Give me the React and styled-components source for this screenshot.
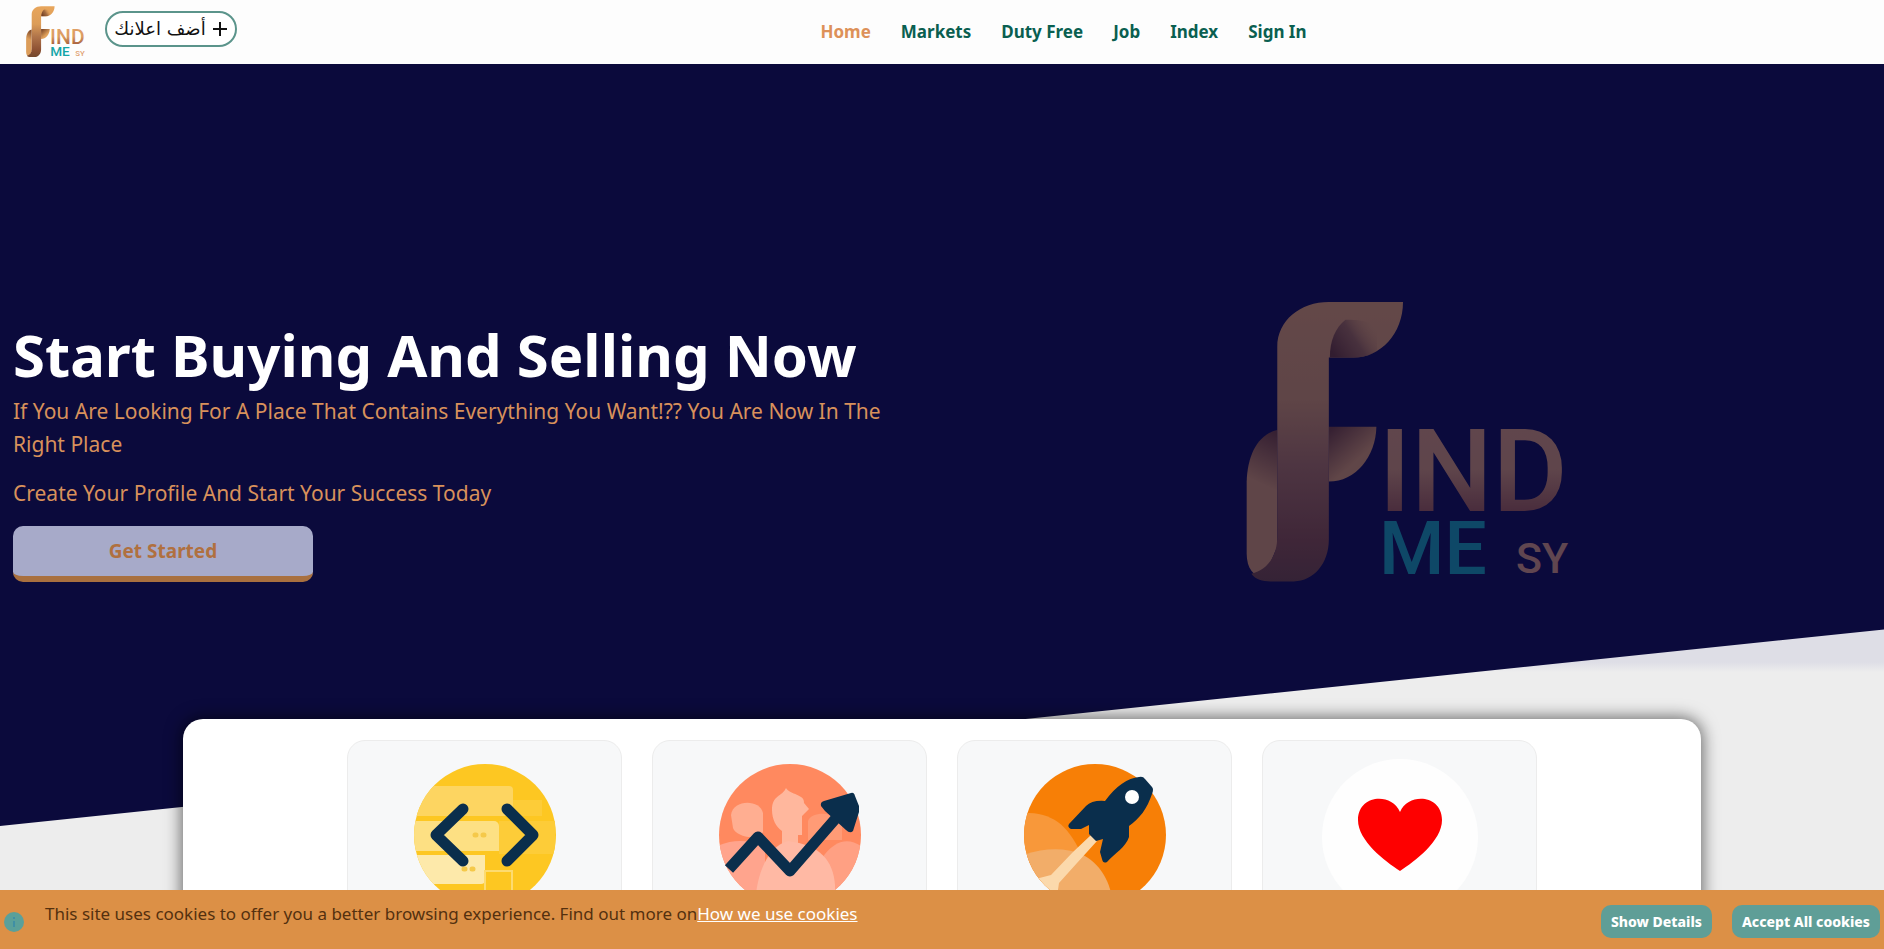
import React from 'react';
import styled, { createGlobalStyle } from 'styled-components';

const GlobalStyle = createGlobalStyle`
  * { box-sizing: border-box; }
  body {
    margin: 0;
    background: #ededed;
    font-family: "Noto Sans", "Open Sans", sans-serif;
  }
  button { font-family: inherit; cursor: pointer; }
`;

const Header = styled.header`
  display: flex;
  align-items: center;
  height: 64px;
  padding-left: 26px;
  background: #fdfdfd;
`;

const HomeLink = styled.a`
  display: flex;
  margin-right: 20px;
`;

const AddButton = styled.button`
  display: flex;
  align-items: center;
  justify-content: center;
  gap: 6px;
  width: 132px;
  height: 36px;
  margin-bottom: 6px;
  padding: 0 4px;
  border: 2px solid #5b948b;
  border-radius: 18px;
  background: #fff;
  color: #111;
  font-family: "DejaVu Sans", sans-serif;
  font-size: 18px;
  line-height: 24px;
  white-space: nowrap;
`;

const Nav = styled.nav`
  display: flex;
  flex: 1;
  justify-content: center;
  gap: 30px;
  padding-left: 6px;
`;

const NavLink = styled.a`
  color: ${(p) => (p.$active ? '#dd9159' : '#0a5f50')};
  font-size: 17px;
  font-weight: 700;
  line-height: 24px;
  text-decoration: none;
`;

const Hero = styled.section`
  position: relative;
  display: grid;
  grid-template-columns: 1fr 1fr;
  min-height: 655px;
  padding-top: 237px;

  &::before {
    content: "";
    position: absolute;
    z-index: -2;
    inset: 0 0 auto;
    height: 608px;
    background: linear-gradient(#dedee6 598px, #ededed);
  }
  &::after {
    content: "";
    position: absolute;
    z-index: -1;
    inset: 0 0 auto;
    height: 762px;
    background: #0b0a3c;
    clip-path: polygon(0 0, 100% 0, 100% 74.2%, 0 100%);
  }
`;

const Pitch = styled.div`
  padding: 14px 32px 0 13px;
`;

const Title = styled.h1`
  margin: 0;
  color: #fff;
  font-size: 58px;
  font-weight: 700;
  line-height: 80px;
`;

const Lead = styled.p`
  margin: 0 0 16px;
  color: #d8915b;
  font-size: 21px;
  line-height: 33px;
`;

const StartButton = styled.button`
  width: 300px;
  height: 56px;
  border: 0;
  border-bottom: 6px solid #a9703f;
  border-radius: 10px;
  background: #a7aac9;
  color: #b0703f;
  font-size: 19px;
  font-weight: 700;
`;

const HeroArt = styled.div`
  display: flex;
  justify-content: center;
  align-items: flex-start;
  padding-right: 10px;
  opacity: 0.4;
`;

const Panel = styled.main`
  display: flex;
  justify-content: center;
  gap: 30px;
  margin: 0 183px;
  padding: 21px 18px 19px;
  border-radius: 20px 20px 0 0;
  background: #fff;
  box-shadow: 0 0 16px 2px rgba(0, 0, 0, 0.55);
`;

const Card = styled.article`
  display: flex;
  flex: 0 1 275px;
  justify-content: center;
  padding: 14px 0;
  border: 1px solid #ececec;
  border-radius: 18px;
  background: #f7f8f9;
`;

const CookieBar = styled.aside`
  position: fixed;
  inset: auto 0 0;
  display: flex;
  height: 59px;
  padding: 0 4px;
  background: #dc9046;
`;

const InfoIcon = styled.svg`
  align-self: center;
  margin: 4px 21px 0 0;
`;

const CookieText = styled.p`
  flex: 1;
  margin: 12px 0 0;
  color: #54300f;
  font-size: 17px;
  line-height: 24px;
`;

const CookieLink = styled.a`
  color: #fff;
`;

const CookieActions = styled.div`
  display: flex;
  align-items: center;
  gap: 20px;
  padding-top: 4px;
`;

const CookieButton = styled.button`
  height: 33px;
  padding: 0 10px;
  border: 0;
  border-radius: 10px;
  background: #5f9e97;
  color: #fff;
  font-size: 14px;
  font-weight: 800;
  white-space: nowrap;
`;

const LogoArt = styled.svg`
  overflow: visible;
`;

function Logo({ id, width }) {
  const u = (n) => `url(#${id}-${n})`;
  return (
    <LogoArt width={width} viewBox="76 62 974 846" role="img" aria-label="Find Me SY">
      <defs>
        <linearGradient id={`${id}-stem`} x1="0" y1="65" x2="0" y2="905" gradientUnits="userSpaceOnUse">
          <stop offset="0" stopColor="#e8a65c" />
          <stop offset="0.35" stopColor="#dc9d58" />
          <stop offset="0.6" stopColor="#b0744a" />
          <stop offset="0.85" stopColor="#8e5234" />
          <stop offset="1" stopColor="#74482e" />
        </linearGradient>
        <linearGradient id={`${id}-fold`} x1="335" y1="215" x2="465" y2="130" gradientUnits="userSpaceOnUse">
          <stop offset="0" stopColor="#6d3a20" />
          <stop offset="0.5" stopColor="#8f5a38" stopOpacity="0.75" />
          <stop offset="1" stopColor="#e8a65c" stopOpacity="0" />
        </linearGradient>
        <linearGradient id={`${id}-arm`} x1="330" y1="450" x2="410" y2="540" gradientUnits="userSpaceOnUse">
          <stop offset="0" stopColor="#784326" />
          <stop offset="1" stopColor="#e0a05a" />
        </linearGradient>
        <linearGradient id={`${id}-back`} x1="165" y1="460" x2="100" y2="600" gradientUnits="userSpaceOnUse">
          <stop offset="0" stopColor="#784326" />
          <stop offset="1" stopColor="#dc9d5a" />
        </linearGradient>
        <linearGradient id={`${id}-word`} x1="0" y1="445" x2="0" y2="692" gradientUnits="userSpaceOnUse">
          <stop offset="0" stopColor="#e0a066" />
          <stop offset="0.5" stopColor="#dc9d62" />
          <stop offset="1" stopColor="#a8623f" />
        </linearGradient>
      </defs>
      <path d="M325 440H468C466 530 405 605 325 605Z" fill={u('arm')} />
      <path d="M170 450C112 462 80 525 78 605V820C78 868 100 890 130 895L170 800Z" fill={u('back')} />
      <path d="M170 200C170 120 240 65 325 65H548C548 160 480 232 400 232H325V780C325 850 280 905 220 905H150C125 905 105 900 92 882C140 870 170 830 170 770Z" fill={u('stem')} />
      <path d="M328 232C328 180 345 142 375 118C420 118 460 122 470 150V212C448 226 424 232 400 232Z" fill={u('fold')} />
      <g fontFamily="Roboto, sans-serif" fontWeight="500">
        <text x="474" y="692" fontSize="346" fill={u('word')}>IND</text>
        <text x="476" y="882" fontSize="225" fill="#14a5a8">ME</text>
        <text x="888" y="880" fontSize="129" fill="#e0a070">SY</text>
      </g>
    </LogoArt>
  );
}

function CodeArt() {
  return (
    <svg width="160" height="160" viewBox="0 0 160 160" aria-hidden="true">
      <clipPath id="code-clip"><circle cx="80" cy="80" r="71" /></clipPath>
      <g clipPath="url(#code-clip)">
        <rect width="160" height="160" fill="#fdc722" />
        <path d="M25 31H104a4 4 0 0 1 4 4V61H5V35Z" fill="#fdd561" />
        <path d="M108 45H137V61H108ZM94 66H150V99H94Z" fill="#fdcc38" />
        <path d="M5 66H89a5 5 0 0 1 5 5V96H5Z" fill="#fde083" />
        <path d="M5 100H80V125a4 4 0 0 1-4 4H5Z" fill="#fde9aa" />
        <path d="M80 116H107V151H80Z" fill="#fdc722" stroke="#fddb70" strokeWidth="2" />
        <path d="M70 80h1M78 80h1M59 114h1M67 114h1" stroke="#f5c94a" strokeWidth="5" strokeLinecap="round" />
      </g>
      <path d="M58 54 31 80 58 106M102 54 128 80 102 106" fill="none" stroke="#0a2e4c" strokeWidth="11" strokeLinecap="round" strokeLinejoin="round" />
    </svg>
  );
}

function GrowthArt() {
  return (
    <svg width="160" height="160" viewBox="0 0 160 160" aria-hidden="true">
      <clipPath id="growth-clip"><circle cx="80" cy="80" r="71" /></clipPath>
      <g clipPath="url(#growth-clip)">
        <rect width="160" height="160" fill="#ff895f" />
        <path d="M21 60C23 44 50 44 53 58V77C48 86 26 82 23 73Z" fill="#ffae91" />
        <path d="M98 66C102 54 132 58 132 70V85H98Z" fill="#ff9b76" />
        <path d="M5 92Q30 80 55 92V155H5Z" fill="#ffa48d" />
        <path d="M112 103Q132 75 155 94V155H112Z" fill="#ffa083" />
        <path d="M62 55C62 40 72 42 76 33C80 40 95 39 94 48L99 54L92 61V80H88V90H72V76C66 72 62 64 62 55Z" fill="#ffb79d" />
        <path d="M45 155C45 125 55 92 78 86C110 90 123 105 125 130V155Z" fill="#ffb9a4" />
      </g>
      <path d="M19 114 48 82 80 116 127 62" fill="none" stroke="#0a2e4c" strokeWidth="11" strokeLinejoin="round" />
      <path d="M111 51Q110 47 114 46L141 38Q144 37 145 41L149 51V57L143 76Q140 79 136 75L115 56Z" fill="#0a2e4c" />
    </svg>
  );
}

function RocketArt() {
  return (
    <svg width="160" height="160" viewBox="0 0 160 160" aria-hidden="true">
      <clipPath id="rocket-clip"><circle cx="80" cy="80" r="71" /></clipPath>
      <g clipPath="url(#rocket-clip)">
        <rect width="160" height="160" fill="#f77f06" />
        <path d="M0 58C35 56 50 66 66 98L40 155H0Z" fill="#f8983a" />
        <path d="M0 103Q38 88 66 99C86 108 98 130 98 155H0Z" fill="#f2ad69" />
        <path d="M5 155V128L36 120 58 97 76 80 82 86 62 108 44 128 40 155Z" fill="#fbd9ac" />
      </g>
      <path d="M90 46C101 31 113 23 124 22Q128 21 130 24L137 32Q139 34 137 39C132 54 125 63 114 71V82C111 92 100 98 92 107Q88 109 87 104L85 97 88 84 81 86 74 79V70L66 74 56 74Q52 72 54 69L71 51Q77 45 90 46Z" fill="#0a2e4c" />
      <circle cx="117" cy="42" r="7" fill="#fff" />
    </svg>
  );
}

function HeartArt() {
  return (
    <svg width="160" height="160" viewBox="0 0 160 160" aria-hidden="true">
      <circle cx="80" cy="82" r="78" fill="#fefefe" />
      <path d="M80 57C71 37 38 40 38 65C38 86 65 106 80 116C95 106 122 86 122 65C122 40 89 37 80 57Z" fill="#fe0000" />
    </svg>
  );
}

const links = ['Home', 'Markets', 'Duty Free', 'Job', 'Index', 'Sign In'];
const features = [CodeArt, GrowthArt, RocketArt, HeartArt];

export default function App() {
  return (
    <>
      <GlobalStyle />
      <Header>
        <HomeLink href="#home"><Logo id="brand" width={59} /></HomeLink>
        <AddButton type="button" dir="rtl">
          <svg width="16" height="16" viewBox="0 0 16 16" aria-hidden="true">
            <path d="M8 1V15M1 8H15" stroke="#111" strokeWidth="2" />
          </svg>
          أضف اعلانك
        </AddButton>
        <Nav aria-label="Main">
          {links.map((label, i) => (
            <NavLink key={label} href="#" $active={i === 0}>{label}</NavLink>
          ))}
        </Nav>
      </Header>
      <Hero>
        <Pitch>
          <Title>Start Buying And Selling Now</Title>
          <Lead>
            If You Are Looking For A Place That Contains Everything You Want!?? You Are Now In The Right Place
          </Lead>
          <Lead>Create Your Profile And Start Your Success Today</Lead>
          <StartButton type="button">Get Started</StartButton>
        </Pitch>
        <HeroArt><Logo id="hero" width={324} /></HeroArt>
      </Hero>
      <Panel>
        {features.map((Art, i) => (
          <Card key={i}><Art /></Card>
        ))}
      </Panel>
      <CookieBar aria-label="Cookie notice">
        <InfoIcon width="20" height="20" viewBox="0 0 20 20" aria-hidden="true">
          <circle cx="10" cy="10" r="10" fill="#5aa09a" />
          <path d="M10 5V7M10 9V15" stroke="#3f8fa5" strokeWidth="2" />
        </InfoIcon>
        <CookieText>
          This site uses cookies to offer you a better browsing experience. Find out more on
          <CookieLink href="#cookies">How we use cookies</CookieLink>
        </CookieText>
        <CookieActions>
          <CookieButton type="button">Show Details</CookieButton>
          <CookieButton type="button">Accept All cookies</CookieButton>
        </CookieActions>
      </CookieBar>
    </>
  );
}
